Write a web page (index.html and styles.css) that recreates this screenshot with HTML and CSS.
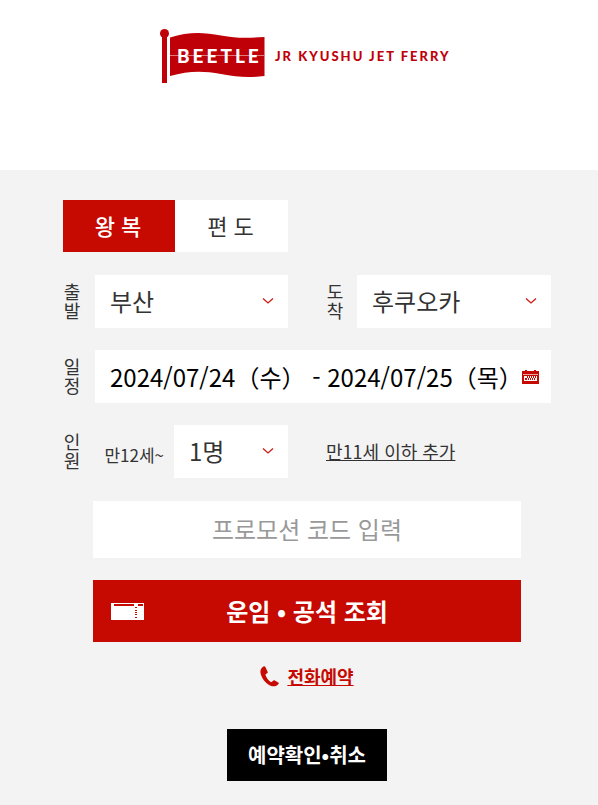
FILE: index.html
```html
<!DOCTYPE html>
<html lang="ko">
<head>
<meta charset="utf-8">
<meta name="viewport" content="width=device-width, initial-scale=1">
<title>BEETLE JR KYUSHU JET FERRY</title>
<link rel="stylesheet" href="styles.css">
</head>
<body>
<header class="header">
  <a class="logo" href="#" aria-label="BEETLE JR KYUSHU JET FERRY">
    <svg width="294" height="56" viewBox="0 0 294 56">
      <g fill="#c00008">
        <circle cx="4.500" cy="5.500" r="4.500"/>
        <path d="M2 8h5v47H2z"/>
        <path d="M10 9.500C28 4 42 4 61 7.500C77 10.500 88 10 104.500 9V48C88 50 77 49 61 46C42 42.500 28 43 10 48z"/>
      </g>
      <path d="M10 27.500h94.500" stroke="#e0787c"/>
      <text class="logo-name" x="17" y="35">BEETLE</text>
      <text class="logo-tag" x="115" y="33">JR KYUSHU JET FERRY</text>
    </svg>
  </a>
</header>
<main class="panel">
  <form class="form">
    <div class="tabs">
      <button class="tab tab-active" type="button">왕 복</button>
      <button class="tab" type="button">편 도</button>
    </div>
    <div class="row">
      <label class="side-label" for="from">출발</label>
      <div class="field">
        <select class="control" id="from"><option>부산</option></select>
        <svg class="chevron" width="12" height="8" viewBox="0 0 12 8"><path d="M1 1.500l5 4.500 5-4.500"/></svg>
      </div>
      <label class="side-label side-label-second" for="to">도착</label>
      <div class="field">
        <select class="control" id="to"><option>후쿠오카</option></select>
        <svg class="chevron" width="12" height="8" viewBox="0 0 12 8"><path d="M1 1.500l5 4.500 5-4.500"/></svg>
      </div>
    </div>
    <div class="row">
      <label class="side-label" for="dates">일정</label>
      <div class="field field-wide">
        <input class="control control-date" id="dates" type="text" value="2024/07/24（수） - 2024/07/25（목）">
        <svg class="calendar" width="17" height="14" viewBox="0 0 17 14" shape-rendering="crispEdges">
          <path fill="#c60a02" d="M3 0h2v1h7V0h2v1h3v13H0V1h3z"/>
          <path fill="#e9a5a2" d="M1 4h15v1H1z"/>
          <path fill="#fff" d="M2 6h13v5H2z"/>
          <path fill="#c60a02" d="M5 6h1v2H5zM7 6h1v2H7zM9 6h1v2H9zM11 6h1v2h-1zM13 6h1v2h-1zM3 8h2v2H3zM6 8h1v2H6zM8 8h1v2H8zM10 8h1v2h-1zM12 8h1v2h-1z"/>
        </svg>
      </div>
    </div>
    <div class="row">
      <label class="side-label" for="adults">인원</label>
      <div class="people">
        <label class="age" for="adults">만12세~</label>
        <div class="field field-count">
          <select class="control" id="adults"><option>1명</option></select>
          <svg class="chevron" width="12" height="8" viewBox="0 0 12 8"><path d="M1 1.500l5 4.500 5-4.500"/></svg>
        </div>
      </div>
      <a class="add-child" href="#">만11세 이하 추가</a>
    </div>
    <div class="actions">
      <input class="promo" type="text" placeholder="프로모션 코드 입력" aria-label="프로모션 코드 입력">
      <button class="search" type="submit">
        <svg class="ticket" width="33" height="17" viewBox="0 0 33 17" shape-rendering="crispEdges">
          <path fill="#fff" d="M0 0h33v17H0z"/>
          <path fill="#c60a02" d="M3 1h20v2H3zM27 1h5v2h-5zM24 4h2v1h-2zM24 7h2v1h-2zM24 9h2v1h-2zM24 11h2v1h-2zM24 14h2v1h-2z"/>
        </svg>
        운임 • 공석 조회
      </button>
    </div>
    <a class="phone" href="#">
      <svg width="20" height="21" viewBox="0 0 20 21"><path fill="#c60a02" d="M3.500.500C1 2 0 4 .500 7c.800 4.500 5 10.500 9.500 12.500 3.500 1.500 6.500 1 8.500-1.500.500-.700.400-1.200-.300-1.600l-3.400-2c-.700-.400-1.200-.300-1.800.300l-1 1c-.500.400-1 .400-1.600 0-2-1.400-4-4-4.800-6.500-.200-.600 0-1.100.600-1.400l1-.600c.600-.4.700-.800.400-1.500L5.500 1.200C5 .200 4.400 0 3.500.500z"/></svg>
      <span class="phone-text">전화예약</span>
    </a>
    <button class="confirm" type="button">예약확인•취소</button>
  </form>
</main>
</body>
</html>
```
FILE: styles.css
```css
* {
  box-sizing: border-box;
}

body {
  margin: 0;
  color: #333;
  background: #f3f3f3;
  font-family: "Noto Sans CJK KR", "Noto Sans CJK JP", sans-serif;
}

button,
input,
select {
  margin: 0;
  border: 0;
  border-radius: 0;
  font-family: inherit;
}

.header {
  display: flex;
  justify-content: center;
  padding: 28px 0 86px 16px;
  background: #fff;
}

.logo svg {
  display: block;
  overflow: visible;
}

.logo-name {
  fill: #fff;
  font: 900 19px Lato, sans-serif;
  letter-spacing: 3px;
}

.logo-tag {
  fill: #c00008;
  font: 900 13px Lato, sans-serif;
  letter-spacing: 2px;
}

.panel {
  padding: 30px 47px 24px 63px;
}

.form {
  display: flex;
  flex-direction: column;
  gap: 22px;
}

.tabs {
  display: grid;
  grid-template-columns: 112px 113px;
  margin-bottom: 1px;
}

.tab {
  height: 52px;
  padding: 0 2px 2px 0;
  color: #333;
  background: #fff;
  font-size: 22px;
}

.tab-active {
  color: #fff;
  background: #c60a02;
  font-weight: 500;
}

.row {
  display: grid;
  grid-template-columns: 32px 193fr 69px 194fr;
  align-items: center;
}

.side-label {
  justify-self: start;
  font-size: 18px;
  line-height: 18px;
  letter-spacing: 1px;
  writing-mode: vertical-rl;
  text-orientation: upright;
}

.side-label-second {
  margin-left: 38px;
}

.field {
  position: relative;
}

.field-wide {
  grid-column: 2 / -1;
}

.control {
  display: block;
  width: 100%;
  height: 53px;
  padding: 0 15px 2px;
  appearance: none;
  color: #333;
  background: #fff;
  font-size: 24px;
}

.control-date {
  padding: 0 32px 0 15px;
  color: #000;
}

.chevron {
  position: absolute;
  top: 22px;
  right: 14px;
  fill: none;
  stroke: #cc1a14;
  stroke-width: 1.3;
  pointer-events: none;
}

.calendar {
  position: absolute;
  top: 20px;
  right: 12px;
  pointer-events: none;
}

.people {
  display: flex;
  align-items: center;
  justify-content: flex-end;
  gap: 10px;
}

.age {
  padding-top: 5px;
  font-size: 17px;
  white-space: nowrap;
}

.field-count {
  width: 114px;
}

.add-child {
  grid-column: 3 / -1;
  justify-self: start;
  margin-left: 38px;
  padding-bottom: 2px;
  color: #333;
  font-size: 18px;
}

.actions {
  display: grid;
  gap: 22px;
  margin: 1px 30px 0;
}

.promo {
  width: 100%;
  height: 57px;
  padding: 0 16px 2px;
  background: #fff;
  font-size: 24px;
  text-align: center;
}

.promo::placeholder {
  color: #999;
}

.search {
  position: relative;
  height: 62px;
  padding-bottom: 3px;
  color: #fff;
  background: #c60a02;
  font-size: 24px;
  font-weight: 700;
}

.ticket {
  position: absolute;
  top: 23px;
  left: 18px;
}

.phone {
  display: flex;
  align-items: center;
  align-self: center;
  gap: 7px;
  color: #c60a02;
  font-size: 18px;
  line-height: 24px;
  font-weight: 700;
  text-decoration: none;
}

.phone-text {
  text-decoration: underline;
}

.confirm {
  align-self: center;
  width: 160px;
  height: 52px;
  margin-top: 19px;
  padding: 0 0 1px;
  color: #fff;
  background: #000;
  font-size: 20px;
  font-weight: 700;
}
```
